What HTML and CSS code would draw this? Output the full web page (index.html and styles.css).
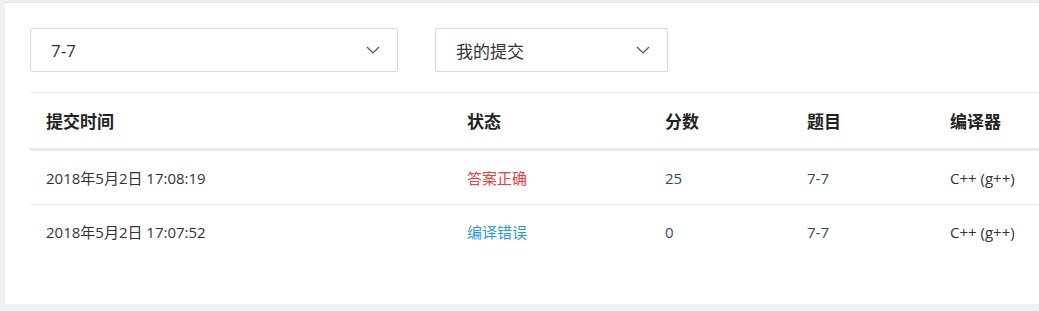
FILE: index.html
```html
<!DOCTYPE html>
<html lang="zh-CN">
<head>
    <meta charset="UTF-8">
    <title>提交列表</title>
    <link rel="stylesheet" href="styles.css">
</head>
<body>

<div class="card">
    <div class="filters">
        <div class="select select-problem">
            <span>7-7</span>
            <svg class="chevron" width="14" height="8" viewBox="0 0 14 8"><path d="M1 1l6 6 6-6" fill="none" stroke="#555" stroke-width="1.2"/></svg>
        </div>
        <div class="select select-scope">
            <span>我的提交</span>
            <svg class="chevron" width="14" height="8" viewBox="0 0 14 8"><path d="M1 1l6 6 6-6" fill="none" stroke="#555" stroke-width="1.2"/></svg>
        </div>
    </div>

    <table class="submissions">
        <thead>
            <tr>
                <th class="col-time">提交时间</th>
                <th class="col-status">状态</th>
                <th class="col-score">分数</th>
                <th class="col-problem">题目</th>
                <th class="col-compiler">编译器</th>
            </tr>
        </thead>
        <tbody>
            <tr>
                <td>2018年5月2日 17:08:19</td>
                <td class="status-ok">答案正确</td>
                <td class="link">25</td>
                <td class="link">7-7</td>
                <td>C++ (g++)</td>
            </tr>
            <tr>
                <td>2018年5月2日 17:07:52</td>
                <td class="status-ce">编译错误</td>
                <td class="link">0</td>
                <td class="link">7-7</td>
                <td>C++ (g++)</td>
            </tr>
        </tbody>
    </table>
</div>

</body>
</html>
```

FILE: styles.css
```css
body {
    margin: 0;
    background: #eef1f4;
    font-family: "Open Sans", "Noto Sans CJK SC", sans-serif;
    color: #333;
    overflow: hidden;
}
.card {
    background: #fff;
    margin: 2px 0 0 5px;
    height: 276px;
    padding: 25px 0 0 25px;
    border-top: 1px solid #e3e6e9;
    box-sizing: content-box;
}
.filters {
    display: flex;
    gap: 37px;
    padding-bottom: 20px;
    border-bottom: 1px solid #eceff1;
}
.select {
    display: flex;
    align-items: center;
    justify-content: space-between;
    height: 42px;
    padding: 0 17px 0 20px;
    border: 1px solid #dadada;
    border-radius: 2px;
    font-size: 17px;
    color: #333;
    box-sizing: content-box;
}
.select-problem {
    width: 329px;
}
.select-scope {
    width: 194px;
}
.chevron {
    display: block;
}
.submissions {
    border-collapse: collapse;
    width: 1060px;
    font-size: 15px;
}
.submissions th {
    text-align: left;
    font-size: 17px;
    font-weight: bold;
    color: #222;
    height: 55px;
    padding: 0 16px;
    border-bottom: 3px solid #e8ebee;
}
.submissions td {
    height: 53px;
    padding: 0 16px;
    border-bottom: 1px solid #eceff1;
}
.submissions tbody tr:last-child td {
    border-bottom: none;
}
.col-time { width: 389px; }
.col-status { width: 166px; }
.col-score { width: 110px; }
.col-problem { width: 111px; }
.status-ok {
    color: #e8403b;
}
.status-ce {
    color: #2a9ad8;
}
.link {
    color: #2b4b70;
}
```
